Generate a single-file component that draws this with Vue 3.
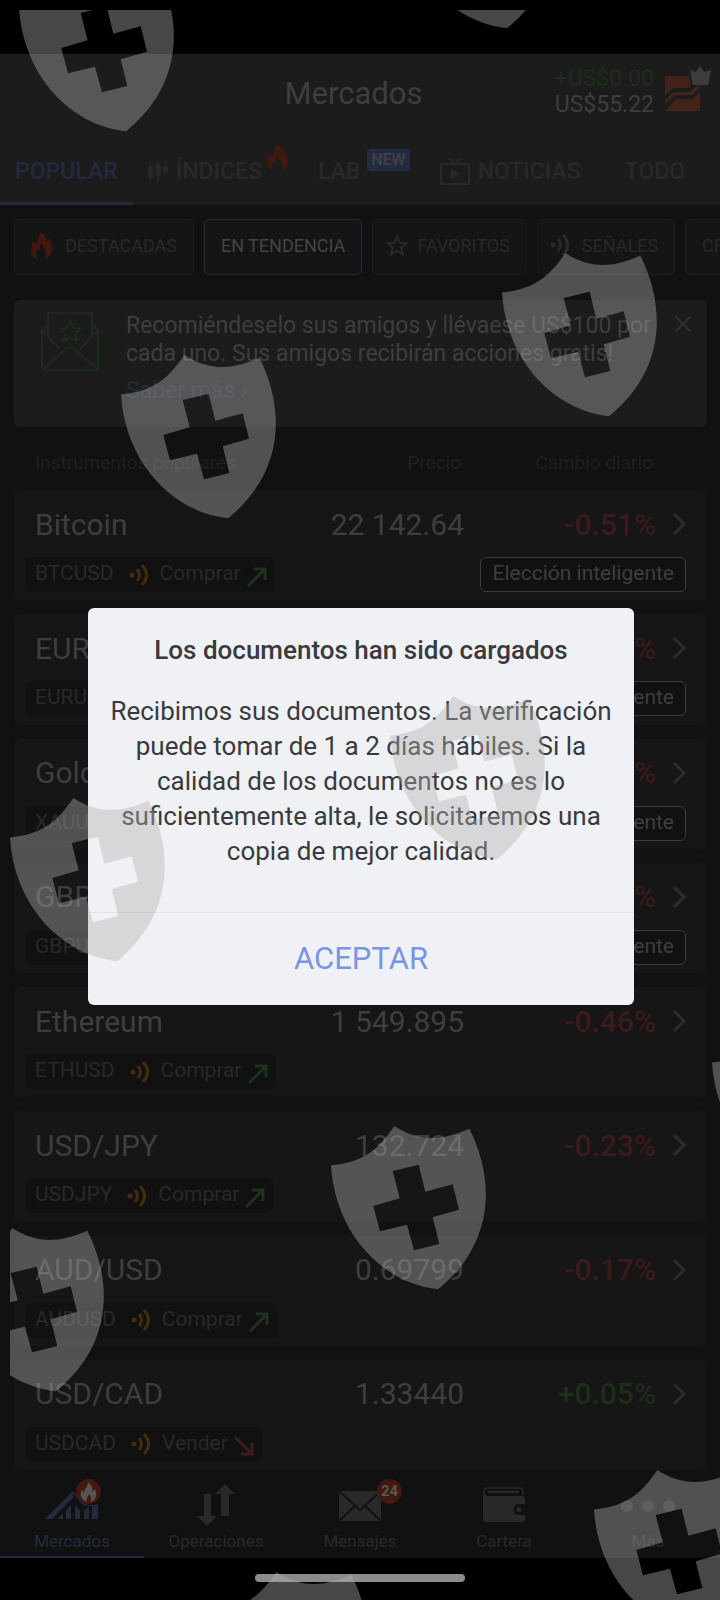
<template>
  <div class="screen">
    <header class="app-header">
      <div class="title-row">
        <h1>Mercados</h1>
        <div class="account">
          <div class="balance">
            <div class="profit">+US$0.00</div>
            <div>US$55.22</div>
          </div>
          <svg class="logo" width="46" height="45" viewBox="0 -10 46 45">
            <path fill="#432218" d="M0 0H24L26 9L23 12H8L0 19ZM0 24L9 16H25L33 9H35V11L27 19H10L0 28ZM0 35L11 23H28L35 16V35Z" />
            <path fill="#3c3c3c" d="M25 -6L31 -4L35 -10L39 -4L46 -6L43 9H28Z" />
          </svg>
        </div>
      </div>
      <nav class="tabs">
        <a href="#" class="tab active">POPULAR</a>
        <a href="#" class="tab">
          <svg class="candles" width="20" height="24" viewBox="0 0 19 23" fill="currentColor">
            <path d="M0 7H2V1H3V7H5V18H3V23H2V18H0ZM7 4H9V0H10V4H12V16H10V22H9V16H7ZM14 7H16V0H17V7H19V13H17V16H16V13H14Z" />
          </svg>
          ÍNDICES
          <svg class="tab-flame" width="21" height="27" viewBox="0 0 21 27"><path :d="flamePath" /></svg>
        </a>
        <a href="#" class="tab">LAB<span class="new">NEW</span></a>
        <a href="#" class="tab">
          <svg class="tv" width="30" height="27" viewBox="0 0 30 27" fill="none" stroke="currentColor">
            <rect x="1" y="6" width="28" height="20" rx="1" stroke-width="2" />
            <path d="M9 0L15 6L21 0" stroke-width="1.5" />
            <path d="M11 11L20 16L11 21Z" fill="currentColor" stroke="none" />
          </svg>
          NOTICIAS
        </a>
        <a href="#" class="tab last">TODO</a>
      </nav>
    </header>

    <div class="chips">
      <button class="chip">
        <svg class="chip-flame" width="21" height="27" viewBox="0 0 21 27"><path :d="flamePath" /></svg>
        DESTACADAS
      </button>
      <button class="chip selected">EN TENDENCIA</button>
      <button class="chip with-icon">
        <svg width="24" height="23" viewBox="0 0 24 23" fill="none" stroke="currentColor" stroke-width="2">
          <path d="M12 2.500L14.600 8.800L21.500 9.300L16.200 13.700L17.900 20.400L12 16.800L6.100 20.400L7.800 13.700L2.500 9.300L9.400 8.800Z" />
        </svg>
        FAVORITOS
      </button>
      <button class="chip with-icon signals">
        <svg width="20" height="22" viewBox="0 0 20 22"><path :d="signalPath" class="signal-arc" /><circle cx="3" cy="11" r="2.500" fill="currentColor" /></svg>
        SEÑALES
      </button>
      <button class="chip">CRIPTO</button>
    </div>

    <section class="banner">
      <svg class="mail-icon" width="58" height="59" viewBox="0 0 58 59" fill="none" stroke="#1d301b" stroke-width="1.600">
        <path d="M7 25V1H51V25M7 12L1 18V56Q1 58 3 58H55Q57 58 57 56V18L51 12M1 18L19 37M57 18L39 37M2 57L25 37Q29 34 33 37L56 57" />
        <path d="M29 9L32 16L39.500 16.500L34 21.500L36 29L29 25.500L22 29L24 21.500L18.500 16.500L26 16Z" />
      </svg>
      <div class="banner-text">
        <p>Recomiéndeselo sus amigos y llévaese US$100 por cada uno. Sus amigos recibirán acciones gratis!</p>
        <a href="#">Saber más ›</a>
      </div>
      <button class="close" aria-label="Cerrar">
        <svg width="16" height="16" viewBox="0 0 16 16" stroke="currentColor" stroke-width="2"><path d="M0.500 0.500L15.500 15.500M15.500 0.500L0.500 15.500" /></svg>
      </button>
    </section>

    <div class="list-head">
      <span>Instrumentos populares</span>
      <span class="price-col">Precio</span>
      <span class="change-col">Cambio diario</span>
    </div>

    <main class="list">
      <article v-for="item in instruments" :key="item.code" class="card">
        <div class="quote">
          <span class="name">{{ item.name }}</span>
          <span class="price price-col">{{ item.price }}</span>
          <span class="change change-col" :class="{ up: item.change[0] === '+' }">{{ item.change }}</span>
          <svg class="chevron" width="13" height="22" viewBox="0 0 13 22" fill="none" stroke="currentColor" stroke-width="3"><path d="M1 1L11 11L1 21" /></svg>
        </div>
        <div class="meta">
          <div class="signal">
            <span class="code">{{ item.code }}</span>
            <svg class="waves" width="20" height="22" viewBox="0 0 20 22"><path :d="signalPath" class="signal-arc" /><circle cx="3" cy="11" r="2.500" fill="currentColor" /></svg>
            <span>{{ item.sell ? 'Vender' : 'Comprar' }}</span>
            <svg class="arrow" :class="{ down: item.sell }" width="20" height="20" viewBox="0 0 20 20" fill="none" stroke="currentColor" stroke-width="3">
              <path :d="item.sell ? 'M1 1L17 17M7 18H18V7' : 'M1 19L17 3M7 2H18V13'" />
            </svg>
          </div>
          <span v-if="item.smart" class="smart">Elección inteligente</span>
        </div>
      </article>
    </main>

    <nav class="bottom-nav">
      <a href="#" class="nav-item active">
        <span class="nav-icon">
          <svg width="54" height="44" viewBox="0 0 54 44" fill="currentColor">
            <path d="M0 36L28 8V15L7 36Z" />
            <path d="M28 9L37 20Q41 24 53 22" fill="none" stroke="currentColor" stroke-width="1.500" />
            <path d="M12 36L18 30V36ZM21 36V27L26 22V36ZM30 36V22L35 27V36ZM39 36V27L44 24V36ZM47 36V24L53 22V36Z" />
          </svg>
          <span class="dot fire">
            <svg width="17" height="20" viewBox="0 0 17 20" fill="#555"><path d="M8 0C12 3 13 6 12 10L15 7C17 12 17 18 10 20C12 17 11 14 9 12C8 15 6 16 7 20C1 18 -1 13 2 8L4 11C4 7 8 5 8 0Z" /></svg>
          </span>
        </span>
        Mercados
      </a>
      <a href="#" class="nav-item">
        <span class="nav-icon">
          <svg width="38" height="44" viewBox="0 0 38 44" fill="currentColor"><path d="M7 11H14V33H20L10 43L0 33H7ZM28 1L38 11H32V33H24V11H18Z" /></svg>
        </span>
        Operaciones
      </a>
      <a href="#" class="nav-item">
        <span class="nav-icon">
          <svg width="42" height="44" viewBox="0 0 42 44">
            <path d="M0 8H42V38H0Z" fill="currentColor" />
            <path d="M0 8L21 27L42 8M0 38L16 23M42 38L26 23" fill="none" stroke="#111" stroke-width="2" />
          </svg>
          <span class="dot">24</span>
        </span>
        Mensajes
      </a>
      <a href="#" class="nav-item">
        <span class="nav-icon">
          <svg width="42" height="44" viewBox="0 0 42 44">
            <path d="M1 10Q1 5 5 5H37Q40 5 40 8V12" fill="none" stroke="currentColor" stroke-width="1.500" />
            <path d="M5 9H36" stroke="currentColor" stroke-width="2" />
            <path d="M0 9Q2 13 6 13H39Q42 13 42 16V21H36A5.500 5.500 0 0 0 36 32H42V36Q42 39 39 39H4Q0 39 0 35Z" fill="currentColor" />
            <circle cx="36" cy="26.500" r="2.500" fill="currentColor" />
          </svg>
        </span>
        Cartera
      </a>
      <a href="#" class="nav-item">
        <span class="nav-icon">
          <svg width="54" height="44" viewBox="0 0 54 44" fill="currentColor"><circle cx="6" cy="23" r="6" /><circle cx="27" cy="23" r="6" /><circle cx="48" cy="23" r="6" /></svg>
        </span>
        Más
      </a>
    </nav>
    <div class="home-bar"><span></span></div>

    <div class="overlay">
      <div class="dialog" role="dialog" aria-labelledby="dialog-title">
        <h2 id="dialog-title">Los documentos han sido cargados</h2>
        <p>Recibimos sus documentos. La verificación puede tomar de 1 a 2 días hábiles. Si la calidad de los documentos no es lo suficientemente alta, le solicitaremos una copia de mejor calidad.</p>
        <button class="accept">ACEPTAR</button>
      </div>
    </div>

    <svg class="shields" aria-hidden="true">
      <path v-for="(s, i) in shields" :key="i" :d="shieldPath" :transform="`translate(${s[0]} ${s[1]})`" fill-rule="evenodd" />
    </svg>
  </div>
</template>

<script setup>
const instruments = [
  { name: 'Bitcoin', code: 'BTCUSD', price: '22 142.64', change: '-0.51%', smart: true },
  { name: 'EUR/USD', code: 'EURUSD', price: '1.08562', change: '-0.15%', smart: true },
  { name: 'Gold', code: 'XAUUSD', price: '1 923.42', change: '-0.12%', smart: true },
  { name: 'GBP/USD', code: 'GBPUSD', price: '1.23571', change: '-0.21%', smart: true },
  { name: 'Ethereum', code: 'ETHUSD', price: '1 549.895', change: '-0.46%' },
  { name: 'USD/JPY', code: 'USDJPY', price: '132.724', change: '-0.23%' },
  { name: 'AUD/USD', code: 'AUDUSD', price: '0.69799', change: '-0.17%' },
  { name: 'USD/CAD', code: 'USDCAD', price: '1.33440', change: '+0.05%', sell: true }
];

const flamePath = 'M9 0C13 2 16 6 16 11L17 6C20 10 21 13 21 17C21 22 18 25 15 27C16 23 15 19 14 16L13 19C13 16 12 13 11 11C8 14 9 18 8 20L7 17C4 20 5 24 6 27C2 25 0 22 0 17C0 14 1 12 2 9L4 13V9L5 13C6 9 9 6 9 0Z';
const signalPath = 'M8 5Q13 11 8 17M13 1Q22 11 13 21';

const shieldPath =
  'M0 39.6C30 36 45 27 63.4 0C88 16 110 15 138.4 2.7C164 54 164 117 107 163.3C50 157 4 106 0 39.6Z' +
  'M61.7 45L87.7 38.7L94.3 65.7L121.7 58.3L128 83.7L101.7 91.3L108.3 118L83 124.3L76 98.7L49 105.3L42.3 80L68.7 72.3Z';

// offsets inside the shields layer, which starts 10px from the top left corner
const shields = [
  [9, -42], [390, -145], [492, 243], [111, 345], [380, 686], [0, 788],
  [321, 1116], [702, 1013], [-61, 1218], [584, 1460], [203, 1562]
];
</script>

<style>
body {
  margin: 0;
  background: #111;
}
</style>

<style scoped>
.screen {
  position: relative;
  display: flex;
  flex-direction: column;
  min-height: 100vh;
  overflow: hidden;
  background: #111;
  color: #3e3e3e;
  font-family: Roboto, "Liberation Sans", sans-serif;
}
h1, h2, p {
  margin: 0;
}
a {
  color: inherit;
  text-decoration: none;
}
button {
  font-family: inherit;
  cursor: pointer;
}
svg {
  display: block;
  flex: none;
}
.app-header {
  border-top: 54px solid #000;
  background: #1c1c1c;
}
.title-row {
  display: grid;
  grid-template-columns: 1fr auto 1fr;
  align-items: center;
  height: 76px;
  padding-right: 9px;
}
h1 {
  grid-column: 2;
  padding: 2px 4px 0 0;
  font-size: 31px;
  font-weight: 400;
}
.account {
  display: flex;
  justify-content: flex-end;
  align-items: center;
  gap: 11px;
}
.balance {
  font-size: 23px;
  line-height: 26px;
  text-align: right;
}
.profit {
  color: #1c2e1b;
}
.logo {
  margin-bottom: 8px;
}
.tabs {
  display: flex;
  height: 75px;
  font-size: 23px;
  font-weight: 500;
  color: #292929;
}
.tab {
  display: flex;
  align-items: center;
  padding: 10px 15px 0;
  border-bottom: 3px solid transparent;
}
.tab.active {
  color: #232a3f;
  border-color: #232a3f;
}
.tab.last {
  padding-left: 29px;
}
.candles, .tv {
  margin-right: 8px;
}
.tab-flame {
  margin: 0 0 28px 5px;
  fill: #43180e;
}
.new {
  margin: 0 0 22px 7px;
  padding: 0 4px;
  border-radius: 4px;
  background: #232b43;
  color: #3f4042;
  font-size: 16px;
  font-weight: 700;
  line-height: 22px;
}
.chips {
  display: flex;
  gap: 10px;
  padding: 14px 0 0 14px;
  overflow: hidden;
}
.chip {
  display: flex;
  flex: none;
  align-items: center;
  gap: 8px;
  height: 56px;
  padding: 0 16px 4px;
  border: 1px solid #1c1c1c;
  border-radius: 5px;
  background: #151515;
  color: #292929;
  font-size: 18px;
}
.chip.selected {
  border-color: #252b41;
  color: #444;
}
.chip.with-icon {
  padding-left: 12px;
}
.chip.signals {
  gap: 12px;
}
.chip-flame {
  margin-right: 5px;
  fill: #43180e;
}
.signal-arc {
  fill: none;
  stroke: currentColor;
  stroke-width: 3;
}
.banner {
  display: flex;
  align-items: flex-start;
  margin: 25px 13px 0 14px;
  padding: 12px 16px 22px 27px;
  border-radius: 6px;
  background: #1c1c1c;
}
.banner-text {
  flex: 1;
  margin-left: 27px;
  font-size: 23px;
  line-height: 28px;
}
.banner-text a {
  display: block;
  margin-top: 9px;
  color: #252b3e;
}
.close {
  margin-top: 4px;
  padding: 0;
  border: 0;
  background: none;
  color: #303030;
}
.list-head {
  display: flex;
  justify-content: space-between;
  padding: 24px 67px 15px 35px;
  color: #202020;
  font-size: 19px;
  line-height: 24px;
}
.price-col {
  flex: 1;
  text-align: right;
}
.change-col {
  width: 192px;
  text-align: right;
}
.list {
  display: grid;
  flex: 1;
  grid-auto-rows: 1fr;
  gap: 14px;
  padding: 0 13px 0 14px;
}
.card {
  padding: 16px 21px 8px 12px;
  border-radius: 6px;
  background: #161616;
}
.quote {
  display: flex;
  align-items: center;
  height: 36px;
  padding-left: 9px;
  font-size: 30px;
}
.change {
  color: #3b1b1b;
  font-weight: 500;
}
.change.up {
  color: #1d2e1b;
}
.chevron {
  margin-left: 17px;
  color: #2c2c2c;
}
.meta {
  display: flex;
  justify-content: space-between;
  margin-top: 15px;
  font-size: 21px;
  line-height: 31px;
}
.signal {
  display: flex;
  align-items: center;
  padding: 1px 8px 3px 9px;
  border-radius: 6px;
  background: #111;
  color: #292929;
}
.code {
  margin-right: 15px;
}
.waves {
  margin: 2px 11px 0 0;
  color: #442d0e;
}
.arrow {
  margin: 6px 0 0 6px;
  color: #1d331b;
}
.arrow.down {
  color: #421c1b;
}
.smart {
  padding: 0 11px 2px;
  border: 1px solid #3c3c3c;
  border-radius: 6px;
  background: #111;
}
.bottom-nav {
  display: grid;
  grid-template-columns: repeat(5, 1fr);
  height: 88px;
  color: #292929;
  font-size: 17px;
}
.nav-item {
  display: flex;
  flex-direction: column;
  align-items: center;
  gap: 4px;
  padding-top: 13px;
  border-bottom: 2px solid transparent;
}
.nav-item.active {
  color: #232b40;
  border-color: #232a3b;
}
.nav-icon {
  position: relative;
}
.dot {
  position: absolute;
  top: -4px;
  right: -21px;
  width: 25px;
  height: 25px;
  border-radius: 50%;
  background: #43180e;
  color: #555;
  font-size: 15px;
  font-weight: 700;
  line-height: 25px;
  text-align: center;
}
.dot.fire {
  display: grid;
  place-items: center;
  right: -2px;
}
.home-bar {
  display: flex;
  justify-content: center;
  height: 42px;
  background: #000;
}
.home-bar span {
  width: 210px;
  height: 8px;
  margin-top: 16px;
  border-radius: 4px;
  background: #8b8b8b;
}
.overlay {
  position: absolute;
  inset: 0;
  display: flex;
  align-items: center;
  justify-content: center;
  padding: 54px 86px 42px 88px;
}
.dialog {
  width: 100%;
  border-radius: 6px;
  background: #f0f1f4;
  color: #393a3d;
  text-align: center;
}
.dialog h2 {
  padding-top: 25px;
  font-size: 26px;
  font-weight: 500;
  line-height: 35px;
}
.dialog p {
  padding: 26px 16px 43px;
  font-size: 26px;
  line-height: 35px;
}
.accept {
  width: 100%;
  height: 93px;
  padding: 0;
  border: 0;
  border-top: 1px solid #e2e3e6;
  background: none;
  color: #7b95e6;
  font-size: 31px;
}
.shields {
  position: absolute;
  top: 10px;
  left: 10px;
  width: calc(100% - 10px);
  height: calc(100% - 10px);
  fill: rgba(178, 178, 178, 0.4);
  pointer-events: none;
}
</style>
